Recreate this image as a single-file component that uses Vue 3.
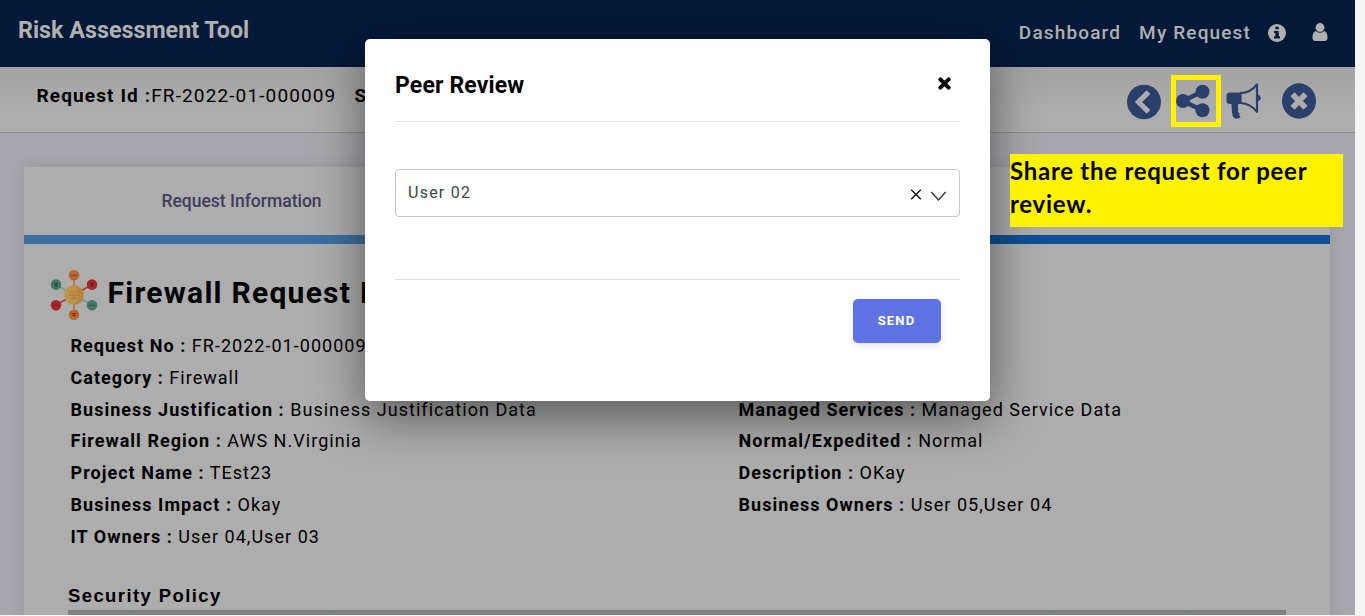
<script setup>
const left = [
  ['Request No', 'FR-2022-01-000009'],
  ['Category', 'Firewall'],
  ['Business Justification', 'Business Justification Data'],
  ['Firewall Region', 'AWS N.Virginia'],
  ['Project Name', 'TEst23'],
  ['Business Impact', 'Okay'],
  ['IT Owners', 'User 04,User 03'],
]
const right = [
  ['Managed Services', 'Managed Service Data'],
  ['Normal/Expedited', 'Normal'],
  ['Description', 'OKay'],
  ['Business Owners', 'User 05,User 04'],
]
</script>

<template>
  <div class="screen">
    <div class="page">
      <header class="navbar">
        <div class="brand">Risk Assessment Tool</div>
        <nav>
          <span class="dash">Dashboard</span>
          <span class="myreq">My Request</span>
          <svg class="info" width="18" height="18" viewBox="0 0 18 18">
            <circle cx="9" cy="9" r="9" fill="#b0b0b0" />
            <path d="M7.4 2.8h3.2v2.5H7.4zM6 7h4.7v5.3H12V14.4H6v-2.1h1.4V9H6z" fill="#041938" />
          </svg>
          <svg class="user" width="16" height="19" viewBox="0 0 16 19">
            <path d="M3.5 8C1.2 9 .5 11.7.5 14.4.5 16.8 1.6 18 3.4 18h9.2c1.8 0 2.9-1.2 2.9-3.6 0-2.7-.7-5.4-3-6.4A6.3 6.3 0 0 1 8 9.8 6.3 6.3 0 0 1 3.5 8z" fill="#b0b0b0" />
            <circle cx="8" cy="4.6" r="4.5" fill="#b0b0b0" />
          </svg>
        </nav>
      </header>
      <section class="subbar">
        <div class="reqid"><b>Request Id :</b>FR-2022-01-000009<b class="status">S</b></div>
        <div class="actions">
          <svg width="34" height="36" viewBox="0 0 34 36">
            <ellipse cx="17" cy="18" rx="17" ry="17.2" fill="#2b3f6c" />
            <path d="M21.5 8.2 11.500 18l10 9.800" fill="none" stroke="#acacac" stroke-width="5.2" />
          </svg>
          <div class="share">
            <svg width="40" height="42" viewBox="0 0 40 42">
              <path d="M26.5 11.5 7 21l19.500 9.500" fill="none" stroke="#2b3f6c" stroke-width="4.600" />
              <g fill="#2b3f6c"><circle cx="26.500" cy="11.800" r="7" /><circle cx="7" cy="21" r="7" /><circle cx="26.500" cy="30.300" r="7" /></g>
            </svg>
          </div>
          <svg class="horn" width="36" height="38" viewBox="0 0 36 38">
            <path d="M15 10.500H4C1.800 10.500.5 11.500.5 13.500v5.800c0 2 1.300 2.700 3.700 2.700h1.300c.3 5.700.2 9.800 1.700 13.100 1.500 2 5 2.100 7.400.2-1.300-1.700-1.300-2.300-1-3.500-2.100-1.700-2-3-1.100-4.500-1-1.800-.8-3.200 0-5.300H15z" fill="#2b3f6c" />
            <path d="M14.500 11.200C22 10.800 27 7.500 31 2.300V29.800C27 25 21 21.300 14.500 21z" fill="none" stroke="#2b3f6c" stroke-width="2.200" stroke-linejoin="round" />
            <path d="M32 13.200c3 .5 3 5.100 0 5.600z" fill="#2b3f6c" stroke="#2b3f6c" />
          </svg>
          <svg class="cancel" width="34" height="36" viewBox="0 0 34 36">
            <ellipse cx="17" cy="18" rx="17" ry="17.700" fill="#2b3f6c" />
            <path d="m10.500 11.200 13 13.600m0-13.600-13 13.600" stroke="#acacac" stroke-width="5.600" />
          </svg>
        </div>
      </section>
      <main class="card">
        <div class="tabs"><div class="tab">Request Information</div><div class="tab rest"></div></div>
        <div class="title">
          <svg width="48" height="52" viewBox="0 0 48 52">
            <g stroke-width="1.600" fill="none">
              <path d="M24 6v40" stroke="#b9713c" />
              <path d="m6 15.500 18 10.500 18 10" stroke="#779c8b" />
              <path d="m6 36 18-10 18-10.500" stroke="#a53838" />
            </g>
            <circle cx="24" cy="26" r="9.800" fill="#bd9347" />
            <path d="M24 16.200a9.800 9.800 0 0 1 0 19.600 12 12 0 0 0 0-19.600" fill="#b87a38" opacity=".6" />
            <path d="M19 23h10M19 26h10M20.500 29h7" stroke="#b1743a" stroke-width="1.200" />
            <g fill="#b96631"><circle cx="24" cy="6.300" r="5.300" /><circle cx="24" cy="45.700" r="5.300" /></g>
            <g fill="#aa2529"><circle cx="42" cy="15.600" r="5.300" /><circle cx="6" cy="36.300" r="5.300" /></g>
            <g fill="#417866"><circle cx="6" cy="15.600" r="5.300" /><circle cx="42" cy="36.300" r="5.300" /></g>
            <path d="M21 6.300h6M3 36.300h6M39 36.300h6" stroke="#4b302a" stroke-width="1.300" stroke-dasharray="1.500 .7" opacity=".7" />
            <path d="M4 14.600h4M4.600 16.600h3M40 14.600h4M40.600 16.600h3" stroke="#302020" stroke-width="1.200" opacity=".75" />
            <path d="M21.500 44.700h5M22.500 46.700h3" stroke="#922222" stroke-width="1.300" />
          </svg>
          <h1>Firewall Request Information</h1>
        </div>
        <div class="details">
          <div class="col">
            <p v-for="r in left" :key="r[0]"><b>{{ r[0] }} :</b> {{ r[1] }}</p>
          </div>
          <div class="col second">
            <p v-for="r in right" :key="r[0]"><b>{{ r[0] }} :</b> {{ r[1] }}</p>
          </div>
        </div>
        <h2>Security Policy</h2>
        <div class="table"><i></i><i></i><i></i><i></i><i></i></div>
      </main>
    </div>

    <div class="modal">
      <div class="mhead">
        <span>Peer Review</span>
        <svg width="13" height="13" viewBox="0 0 13 13"><path d="m2.400 2.400 8.200 8.200m0-8.200-8.200 8.200" stroke="#000" stroke-width="4" stroke-linecap="round" /></svg>
      </div>
      <div class="mbody">
        <div class="select">
          <span>User 02</span>
          <svg width="38" height="14" viewBox="0 0 38 14" fill="none">
            <path d="m1.200 1.700 9.600 9.600m0-9.600-9.600 9.600" stroke="#111" stroke-width="1.400" />
            <path d="m21.300 4 7.200 8 7.200-8" stroke="#333" stroke-width="1.300" />
          </svg>
        </div>
      </div>
      <div class="mfoot"><button>SEND</button></div>
    </div>

    <div class="note"><div>Share the request for peer</div><div>review.</div></div>
  </div>
</template>

<style>
body { margin: 0; overflow: hidden; }
</style>
<style scoped>
.screen { position: relative; width: 1365px; height: 616px; overflow: hidden; background: #f5f5f5; font-family: Roboto, sans-serif; color: #000; box-sizing: border-box; }
.page { width: 1355px; height: 615px; background: #a8a7ad; overflow: hidden; }
.navbar { height: 67px; background: #041938; display: flex; justify-content: space-between; color: #b0b0b0; box-sizing: border-box; padding: 0 27px 0 18px; }
.brand { font-size: 23.300px; font-weight: 700; line-height: 60px; white-space: nowrap; }
nav { display: flex; align-items: center; height: 65px; font-size: 19px; font-weight: 500; letter-spacing: 1.150px; white-space: nowrap; }
.myreq { margin-left: 18px; }
.info { margin-left: 17px; }
.user { margin-left: 26px; }
.subbar { height: 65px; background: linear-gradient(#a3a3a3, #adadad 45px); border-bottom: 1px solid #8e8e92; display: flex; justify-content: space-between; padding: 0 39px 0 36.500px; }
.reqid { font-size: 19px; letter-spacing: 1.120px; line-height: 57px; white-space: nowrap; }
b { font-weight: 700; }
.status { margin-left: 18px; }
.actions { display: flex; align-items: center; height: 69px; }
.share { width: 40px; height: 42px; border: 5px solid #fff200; margin: -1px 0 0 10px; }
.share svg { display: block; }
.horn { margin: -1px 0 0 5px; }
.cancel { margin: -1px 0 0 20px; }
.card { margin: 34px 25px 0 24px; height: 460px; background: #adadad; box-shadow: 0 0 14px rgba(60, 60, 80, .18); }
.tabs { display: flex; height: 77px; }
.tab { width: 435px; height: 68px; border-bottom: 9px solid #3c6f9f; text-align: center; font-size: 17.500px; line-height: 68px; color: #3f3c5c; font-weight: 500; }
.rest { flex: 1; border-color: #0f5093; }
.title { display: flex; align-items: center; padding-left: 26px; height: 52px; margin-top: 25px; }
h1 { margin: 0 0 5px 9.500px; font-size: 30px; line-height: 40px; font-weight: 700; letter-spacing: 1.250px; white-space: nowrap; }
.details { display: flex; margin: 9px 0 0 46.500px; }
.col { flex: 0 0 668px; }
.second { padding-top: 63.600px; }
p { margin: 0; font-size: 18px; line-height: 31.800px; letter-spacing: 1.030px; white-space: nowrap; }
h2 { font: 700 18.500px/24px "Liberation Sans", sans-serif; letter-spacing: 1.400px; margin: 31px 0 0 44px; }
.table { margin: 2px 44px 0; height: 10px; background: #828282; border-top: 1px solid #74807a; display: flex; }
.table i { box-sizing: border-box; border-right: 1px solid #788079; flex: 1; }
.table i:nth-child(1) { flex: 0 0 62px; }
.table i:nth-child(2) { flex: 0 0 199px; }
.table i:nth-child(4) { flex: 0 0 135px; }
.table i:nth-child(5) { flex: 0 0 95px; }
.modal { position: absolute; left: 365px; top: 39px; width: 625px; height: 362px; box-sizing: border-box; padding: 0 30px; background: #fff; border-radius: 5px; box-shadow: 0 15px 50px rgba(0, 0, 0, .5); }
.mhead { height: 82px; border-bottom: 1px solid #e3e3e3; display: flex; justify-content: space-between; font-size: 23px; font-weight: 700; letter-spacing: .150px; line-height: 93px; }
.mhead svg { margin: 38px 9px 0 0; }
.mbody { height: 158px; padding-top: 47px; box-sizing: border-box; border-bottom: 1px solid #dedede; }
.select { height: 48px; box-sizing: border-box; border: 1px solid #c7c7c7; border-radius: 4px; padding: 0 11px 0 12px; display: flex; justify-content: space-between; font-size: 16px; letter-spacing: 1.250px; line-height: 46px; color: #444; }
.select svg { margin-top: 18px; }
.mfoot { display: flex; justify-content: flex-end; padding: 19px 19px 0 0; }
button { width: 88px; height: 44px; border: 0; border-radius: 5px; background: #5e72e4; color: #fff; font: 700 13px Roboto, sans-serif; letter-spacing: 1.200px; padding: 0 1px 2px 0; box-shadow: 0 3px 6px rgba(50, 50, 93, .12); }
.note { position: absolute; left: 1010px; top: 154px; width: 333px; height: 73px; background: #fff200; font: 700 24px/33px Lato, sans-serif; letter-spacing: .730px; white-space: nowrap; }
</style>
